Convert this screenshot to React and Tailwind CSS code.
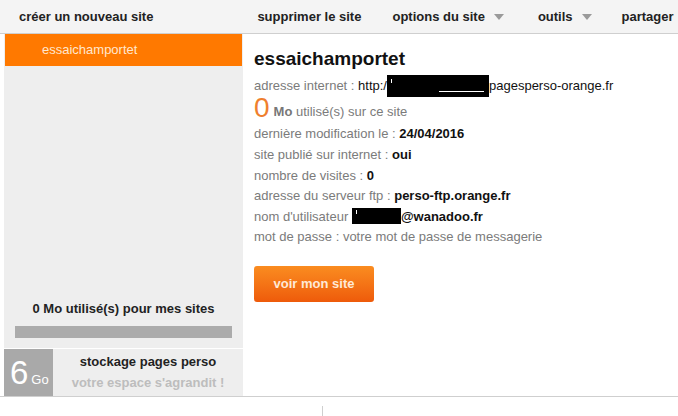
import React from "react";

function Tri() {
  return (
    <svg width="10" height="6" viewBox="0 0 10 6" className="ml-[9px] mt-[1px]">
      <polygon points="0,0 10,0 5,6" fill="#9a9a9a" />
    </svg>
  );
}

function Row({ children, className = "" }) {
  return <div className={"flex items-center text-[13px] text-[#7b7b7b] whitespace-nowrap " + className}>{children}</div>;
}

export default function App() {
  return (
    <div className="w-[678px] h-[416px] bg-white overflow-hidden" style={{ fontFamily: '"Liberation Sans", Arial, sans-serif' }}>
      <header className="h-[34px] bg-[#f4f4f4] border-b border-[#cfcfcf] flex items-center text-[13px] font-bold text-[#222] whitespace-nowrap">
        <span className="ml-[19px]">créer un nouveau site</span>
        <span className="ml-[104px]">supprimer le site</span>
        <span className="ml-[31px] flex items-center">options du site<Tri /></span>
        <span className="ml-[34px] flex items-center">outils<Tri /></span>
        <span className="ml-[30px]">partager</span>
      </header>
      <div className="flex h-[362px]">
        <aside className="ml-[4px] w-[239px] bg-[#eeeeee] flex flex-col px-[1px]">
          <div className="h-[32px] bg-[#ff7900] flex items-center pl-[37px] text-[13px] text-[#ffe7cf]">essaichamportet</div>
          <div className="flex-1" />
          <div className="text-center text-[13px] font-bold text-[#222] leading-[15px]">0 Mo utilisé(s) pour mes sites</div>
          <div className="mx-[10px] mt-[10px] h-[12px] bg-[#ababab]" />
          <div className="mt-[10px] h-[1px] bg-white -mx-[1px]" />
          <div className="h-[47px] flex -mx-[1px]">
            <div className="w-[49px] bg-[#a9a9a9] text-white flex items-end pl-[6px] pb-[9px]">
              <span className="text-[33px] leading-[28px]">6</span>
              <span className="text-[13px] ml-[3px] leading-[14px]">Go</span>
            </div>
            <div className="flex-1 flex flex-col items-center justify-center font-bold text-[13px] leading-[21px] pb-[2px]">
              <span className="text-[#222]">stockage pages perso</span>
              <span className="text-[#bdbdbd]">votre espace s'agrandit !</span>
            </div>
          </div>
        </aside>
        <main className="flex-1 pl-[11px] pt-[12px]">
          <h1 className="text-[19px] font-bold text-[#111] leading-[26px]">essaichamportet</h1>
          <Row className="h-[21px] mt-[3px]">
            adresse internet :&nbsp;<span className="text-[#111]">http:/</span>
            <span className="relative inline-block w-[102px] h-[22px] bg-black">
              <span className="absolute left-[4px] top-[4px] w-[1px] h-[4px] bg-white" />
              <span className="absolute left-[52px] top-[16px] w-[45px] h-[1px] bg-white" />
            </span>
            <span className="text-[#111]">pagesperso-orange.fr</span>
          </Row>
          <div className="h-[27px] flex items-end pb-[2px] text-[13px] text-[#7b7b7b] whitespace-nowrap">
            <span className="text-[28px] leading-[26px] text-[#ef7f2e] mr-[4px]">0</span>
            <span className="font-bold text-[13px] text-[#777]">Mo</span>&nbsp;utilisé(s) sur ce site
          </div>
          <Row className="h-[21px]">dernière modification le :&nbsp;<b className="text-[#111]">24/04/2016</b></Row>
          <Row className="h-[21px]">site publié sur internet :&nbsp;<b className="text-[#111]">oui</b></Row>
          <Row className="h-[20.5px]">nombre de visites :&nbsp;<b className="text-[#111]">0</b></Row>
          <Row className="h-[20.5px]">adresse du serveur ftp :&nbsp;<b className="text-[#111]">perso-ftp.orange.fr</b></Row>
          <Row className="h-[20.5px]">
            nom d'utilisateur&nbsp;
            <span className="relative inline-block w-[49px] h-[16px] bg-black">
              <span className="absolute left-[4px] top-[2px] w-[1px] h-[4px] bg-white" />
            </span>
            <b className="text-[#111]">@wanadoo.fr</b>
          </Row>
          <Row className="h-[20.5px]">mot de passe : votre mot de passe de messagerie</Row>
          <button className="mt-[19px] w-[120px] h-[36px] rounded-[3px] bg-gradient-to-b from-[#fa8c20] to-[#ee5a0a] text-[13px] font-bold text-[#ffe9d6]">voir mon site</button>
        </main>
      </div>
      <div className="border-t border-[#cfcfcf] h-[20px] relative">
        <div className="absolute left-[322px] top-[9px] w-[1px] h-[12px] bg-[#cfcfcf]" />
      </div>
    </div>
  );
}
